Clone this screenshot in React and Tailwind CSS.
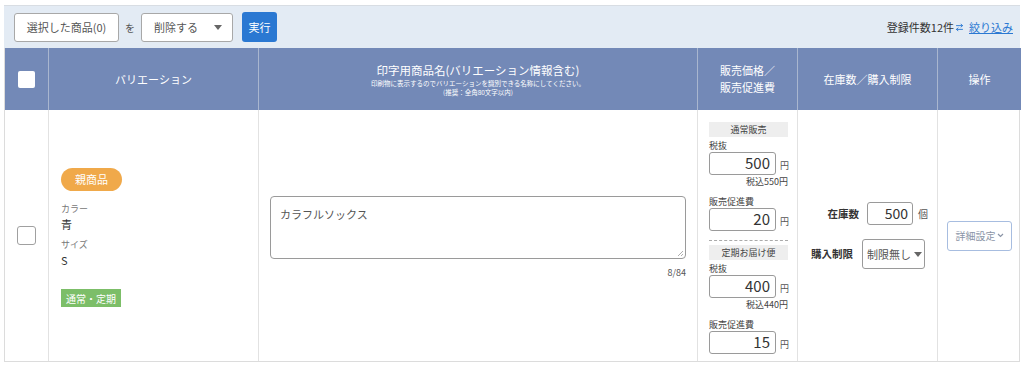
import React from 'react';
import { ArrowRightLeft } from 'lucide-react';

const font = { fontFamily: '"Noto Sans CJK JP", "Noto Sans", sans-serif' };

const YenInput = ({ value }) => (
  <div className="flex items-end gap-1">
    <div className="w-[67px] h-[23px] border border-[#9a9a9a] rounded-[3px] flex items-center justify-end pr-[5px] text-[15px] text-[#333]">
      {value}
    </div>
    <span className="text-[9px] text-[#555] pb-[3px]">円</span>
  </div>
);

const PriceBlock = ({ title, net, gross, promo }) => (
  <div className="flex flex-col">
    <div className="bg-[#eeeeee] h-[15px] flex items-center justify-center text-[9px] text-[#444] w-[79px]">{title}</div>
    <div className="text-[9px] text-[#444] mt-[3px] leading-[12px]">税抜</div>
    <YenInput value={net} />
    <div className="text-[9px] text-[#444] text-right w-[79px] leading-[14px]">{gross}</div>
    <div className="text-[9px] text-[#444] mt-[7px] leading-[12px]">販売促進費</div>
    <YenInput value={promo} />
  </div>
);

export default function App() {
  return (
    <div style={font} className="w-[1024px] h-[365px] bg-white pl-[4px] pt-[5px] text-[#333]">
      <div className="w-[1016px]">
        <div className="h-[43px] bg-[#e3ebf4] border-t border-[#d8dde3] flex items-center pl-[10px] pr-[7px]">
          <div className="w-[105px] h-[29px] bg-white border border-[#a8a8a8] rounded-[3px] flex items-center justify-center text-[11px] text-[#555]">
            選択した商品(0)
          </div>
          <span className="text-[10px] text-[#555] mx-[6px]">を</span>
          <div className="w-[92px] h-[29px] bg-white border border-[#a8a8a8] rounded-[3px] flex items-center justify-between pl-[12px] pr-[10px] text-[11px] text-[#555]">
            <span>削除する</span>
            <span className="w-0 h-0 border-l-[4px] border-r-[4px] border-t-[5px] border-l-transparent border-r-transparent border-t-[#666]" />
          </div>
          <div className="ml-[9px] w-[35px] h-[30px] bg-[#2a78d2] rounded-[3px] flex items-center justify-center text-[11px] text-white">
            実行
          </div>
          <div className="ml-auto flex items-center text-[11px] text-[#333]">
            <span>登録件数12件</span>
            <ArrowRightLeft className="w-[9px] h-[9px] text-[#2a78d2] mx-[1px]" strokeWidth={2.5} />
            <span className="text-[#2a78d2] underline ml-[4px]">絞り込み</span>
          </div>
        </div>

        <div className="grid grid-cols-[44px_210px_439px_100px_140px_83px] border-l border-r border-b border-[#dcdcdc]">
          <div className="h-[62px] bg-[#7389b7] flex items-center justify-center border-r border-[#a9b6cf]">
            <div className="w-[17px] h-[17px] bg-white rounded-[2px]" />
          </div>
          <div className="h-[62px] bg-[#7389b7] flex items-center justify-center text-white text-[11px] border-r border-[#a9b6cf]">
            バリエーション
          </div>
          <div className="h-[62px] bg-[#7389b7] flex flex-col items-center justify-center text-white border-r border-[#a9b6cf]">
            <div className="text-[11.5px] leading-[16px]">印字用商品名(バリエーション情報含む)</div>
            <div className="text-[6.5px] leading-[9px] mt-[1px]">印刷物に表示するのでバリエーションを識別できる名称にしてください。</div>
            <div className="text-[6.5px] leading-[9px]">(推奨：全角80文字以内)</div>
          </div>
          <div className="h-[62px] bg-[#7389b7] flex flex-col items-center justify-center text-white text-[11px] leading-[17px] border-r border-[#a9b6cf]">
            <div>販売価格／</div>
            <div>販売促進費</div>
          </div>
          <div className="h-[62px] bg-[#7389b7] flex items-center justify-center text-white text-[11px] border-r border-[#a9b6cf]">
            在庫数／購入制限
          </div>
          <div className="h-[62px] bg-[#7389b7] flex items-center justify-center text-white text-[11px]">
            操作
          </div>

          <div className="h-[251px] flex items-center justify-center border-r border-[#e2e2e2]">
            <div className="w-[19px] h-[19px] border border-[#a0a0a0] rounded-[3px]" />
          </div>
          <div className="h-[251px] flex flex-col pt-[58px] pl-[12px] border-r border-[#e2e2e2]">
            <div className="w-[61px] h-[23px] bg-[#f0a94a] rounded-full flex items-center justify-center text-white text-[11px]">
              親商品
            </div>
            <div className="text-[9px] text-[#777] mt-[11px] leading-[14px]">カラー</div>
            <div className="text-[11px] text-[#333] leading-[16px]">青</div>
            <div className="text-[9px] text-[#777] mt-[6px] leading-[14px]">サイズ</div>
            <div className="text-[11px] text-[#333] leading-[16px]">S</div>
            <div className="mt-[21px] w-[60px] h-[18px] bg-[#7cbe68] flex items-center justify-center text-white text-[10px]">
              通常・定期
            </div>
          </div>
          <div className="h-[251px] flex flex-col pt-[86px] px-[11px] border-r border-[#e2e2e2]">
            <div className="h-[63px] border border-[#9a9a9a] rounded-[4px] px-[9px] pt-[9px] text-[11px] text-[#555] relative">
              カラフルソックス
              <svg className="absolute right-[1px] bottom-[1px]" width="7" height="7" viewBox="0 0 7 7">
                <path d="M6 1L1 6M6 4L4 6" stroke="#999" strokeWidth="0.8" />
              </svg>
            </div>
            <div className="text-right text-[9px] text-[#555] mt-[7px] leading-[13px]">8/84</div>
          </div>
          <div className="h-[251px] flex flex-col pl-[11px] pt-[12px] border-r border-[#e2e2e2]">
            <PriceBlock title="通常販売" net="500" gross="税込550円" promo="20" />
            <div className="w-[79px] border-t border-dashed border-[#aaa] mt-[9px] mb-[4px]" />
            <PriceBlock title="定期お届け便" net="400" gross="税込440円" promo="15" />
          </div>
          <div className="h-[251px] flex flex-col items-end justify-center pr-[12px] gap-[14px] border-r border-[#e2e2e2]">
            <div className="flex items-end gap-[5px] mr-[-3px]">
              <span className="text-[10.5px] font-bold text-[#333] mr-[3px] pb-[3px]">在庫数</span>
              <div className="w-[46px] h-[23px] border border-[#9a9a9a] rounded-[3px] flex items-center justify-end pr-[4px] text-[14px] text-[#333]">500</div>
              <span className="text-[10px] text-[#555] pb-[4px]">個</span>
            </div>
            <div className="flex items-center gap-[9px]">
              <span className="text-[10.5px] font-bold text-[#333]">購入制限</span>
              <div className="w-[63px] h-[30px] border border-[#9a9a9a] rounded-[3px] flex items-center pl-[4px] gap-[3px] text-[11px] text-[#555]">
                <span>制限無し</span>
                <span className="w-0 h-0 border-l-[4px] border-r-[4px] border-t-[5px] border-l-transparent border-r-transparent border-t-[#666]" />
              </div>
            </div>
          </div>
          <div className="h-[251px] flex items-center justify-center">
            <div className="w-[65px] h-[30px] border border-[#a7bde0] rounded-[3px] flex items-center justify-center text-[10px] text-[#8a94a6]">
              詳細設定
              <svg width="7" height="5" viewBox="0 0 7 5" className="ml-[1px]">
                <path d="M1 1L3.5 3.5L6 1" stroke="#8a94a6" strokeWidth="1.2" fill="none" />
              </svg>
            </div>
          </div>
        </div>
      </div>
    </div>
  );
}
